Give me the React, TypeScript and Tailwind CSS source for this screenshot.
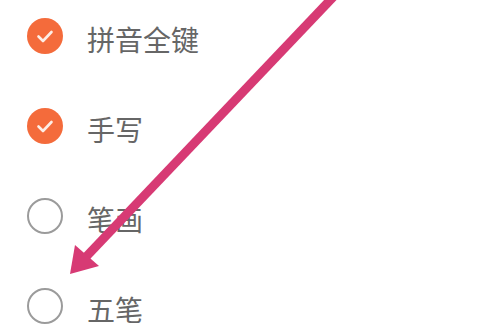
import React from 'react';

interface Option {
  label: string;
  checked: boolean;
}

const options: Option[] = [
  { label: '拼音全键', checked: true },
  { label: '手写', checked: true },
  { label: '笔画', checked: false },
  { label: '五笔', checked: false },
];

const CheckCircle: React.FC<{ checked: boolean }> = ({ checked }) => {
  if (!checked) {
    return <div className="w-[36px] h-[36px] rounded-full border-[2px] border-[#9b9b9b] shrink-0" />;
  }
  return (
    <div className="w-[36px] h-[36px] rounded-full bg-[#f46b3b] flex items-center justify-center shrink-0">
      <svg width="36" height="36" viewBox="0 0 36 36" fill="none">
        <path
          d="M11.5 18.5 L16 23 L24.5 14"
          stroke="#fdeee6"
          strokeWidth="2.6"
          strokeLinecap="round"
          strokeLinejoin="round"
        />
      </svg>
    </div>
  );
};

const App: React.FC = () => {
  return (
    <div
      className="relative w-[500px] h-[330px] bg-white overflow-hidden"
      style={{ fontFamily: '"Noto Sans CJK SC", "Noto Sans", sans-serif' }}
    >
      {/* Options list */}
      <div className="flex flex-col gap-[54px] pt-[18px] pl-[27px]">
        {options.map((opt) => (
          <div key={opt.label} className="flex items-center h-[36px] gap-[24px]">
            <CheckCircle checked={opt.checked} />
            <span className="text-[28px] leading-none text-[#666666] translate-y-[3px]">{opt.label}</span>
          </div>
        ))}
      </div>

      {/* Annotation arrow */}
      <svg className="absolute inset-0 pointer-events-none" width="500" height="330" viewBox="0 0 500 330">
        <line x1="336" y1="-6" x2="84" y2="259" stroke="#d73a74" strokeWidth="9" />
        <polygon points="70,274 75,245 99,266" fill="#d73a74" />
      </svg>
    </div>
  );
};

export default App;
